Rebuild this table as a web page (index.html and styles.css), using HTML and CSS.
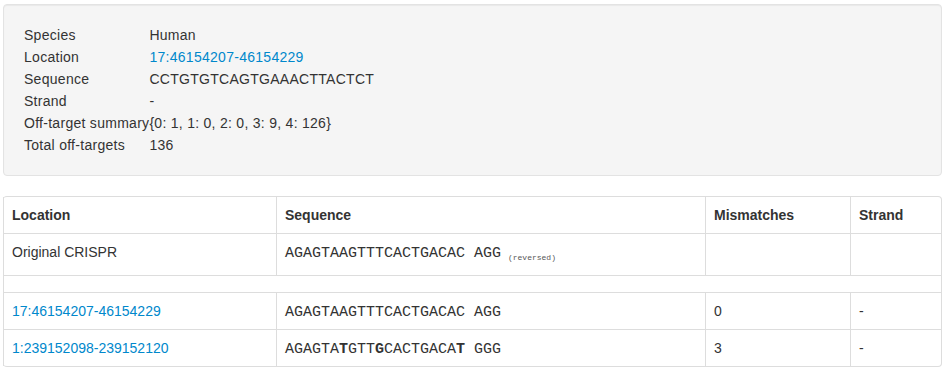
FILE: index.html
```html
<!DOCTYPE html>
<html lang="en">
<head>
    <meta charset="UTF-8">
    <title>CRISPR off-targets</title>
    <link rel="stylesheet" href="styles.css">
</head>
<body>
<div class="page">
    <div class="well">
        <table class="summary">
            <tr><td>Species</td><td>Human</td></tr>
            <tr><td>Location</td><td><a href="#">17:46154207-46154229</a></td></tr>
            <tr><td>Sequence</td><td>CCTGTGTCAGTGAAACTTACTCT</td></tr>
            <tr><td>Strand</td><td>-</td></tr>
            <tr><td>Off-target summary</td><td>{0: 1, 1: 0, 2: 0, 3: 9, 4: 126}</td></tr>
            <tr><td>Total off-targets</td><td>136</td></tr>
        </table>
    </div>

    <table class="table table-bordered">
        <thead>
        <tr>
            <th class="col-loc">Location</th>
            <th class="col-seq">Sequence</th>
            <th class="col-mis">Mismatches</th>
            <th class="col-strand">Strand</th>
        </tr>
        </thead>
        <tbody>
        <tr>
            <td>Original CRISPR</td>
            <td><span class="seq">AGAGTAAGTTTCACTGACAC AGG</span> <sub class="note">(reversed)</sub></td>
            <td></td>
            <td></td>
        </tr>
        <tr class="spacer"><td colspan="4"></td></tr>
        <tr>
            <td><a href="#">17:46154207-46154229</a></td>
            <td><span class="seq">AGAGTAAGTTTCACTGACAC AGG</span></td>
            <td>0</td>
            <td>-</td>
        </tr>
        <tr>
            <td><a href="#">1:239152098-239152120</a></td>
            <td><span class="seq">AGAGTA<b>T</b>GTT<b>G</b>CACTGACA<b>T</b> GGG</span></td>
            <td>3</td>
            <td>-</td>
        </tr>
        </tbody>
    </table>
</div>
</body>
</html>
```

FILE: styles.css
```css
* {
    box-sizing: border-box;
}

body {
    margin: 0;
    font-family: "Liberation Sans", Arial, sans-serif;
    font-size: 14px;
    line-height: 20px;
    color: #333333;
    background: #ffffff;
}

a {
    color: #0088cc;
    text-decoration: none;
}

.page {
    padding: 4px 1px 0 3px;
}

/* summary box */
.well {
    background-color: #f5f5f5;
    border: 1px solid #e3e3e3;
    border-radius: 4px;
    box-shadow: inset 0 1px 1px rgba(0, 0, 0, 0.05);
    padding: 19px 19px 19px 20px;
    margin-bottom: 20px;
}

.summary {
    border-collapse: collapse;
    letter-spacing: 0.28px;
}

.summary td {
    padding: 1px 0;
    vertical-align: top;
}

/* results table */
.table {
    width: 100%;
    border-collapse: separate;
    border-spacing: 0;
}

.table th,
.table td {
    padding: 8px;
    text-align: left;
    vertical-align: top;
    border-top: 1px solid #dddddd;
}

.table th {
    font-weight: bold;
}

.table-bordered {
    border: 1px solid #dddddd;
    border-left: 0;
    border-radius: 4px;
}

.table-bordered th,
.table-bordered td {
    border-left: 1px solid #dddddd;
}

.table-bordered thead tr:first-child th {
    border-top: 0;
}

.col-loc { width: 273px; }
.col-seq { width: 429px; }
.col-mis { width: 145px; }

.table .spacer td {
    padding: 8px;
    height: 17px;
}

.seq {
    font-family: "Liberation Mono", "Courier New", monospace;
    font-size: 15px;
    line-height: 16px;
    white-space: pre;
}

.seq b {
    font-weight: bold;
}

.note {
    font-family: "Liberation Mono", "Courier New", monospace;
    font-size: 8px;
    line-height: 18px;
    vertical-align: -3px;
    color: #555555;
    margin-left: 3px;
}
```
